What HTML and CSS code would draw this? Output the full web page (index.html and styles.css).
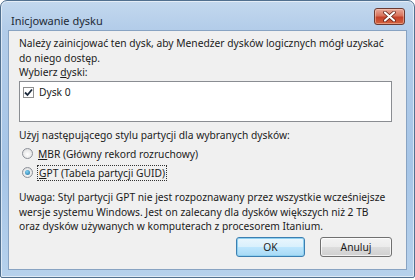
FILE: index.html
```html
<!DOCTYPE html>
<html lang="pl">
<head>
  <meta charset="UTF-8">
  <meta name="viewport" content="width=device-width, initial-scale=1.0">
  <title>Inicjowanie dysku</title>
  <link rel="stylesheet" href="styles.css">
</head>
<body>
  <div class="okno">
    <div class="pasek-tytulu">
      <span class="tytul">Inicjowanie dysku</span>
      <button class="zamknij" aria-label="Zamknij">
        <svg width="13" height="11" viewBox="0 0 13 11">
          <path d="M2 1.5 L11 9.5 M11 1.5 L2 9.5" stroke="#5a1a10" stroke-width="3.6" stroke-linecap="round"/>
          <path d="M2 1.5 L11 9.5 M11 1.5 L2 9.5" stroke="#fff" stroke-width="2.2" stroke-linecap="round"/>
        </svg>
      </button>
    </div>

    <div class="klient">
      <p class="opis">Należy zainicjować ten dysk, aby Menedżer dysków logicznych mógł uzyskać<br>do niego dostęp.</p>
      <div class="etykieta">Wybierz <u>d</u>yski:</div>
      <div class="lista">
        <label class="pozycja">
          <span class="pole-wyboru">
            <svg width="9" height="9" viewBox="0 0 9 9">
              <path d="M1 4.5 L3.5 7 L8 1.5" fill="none" stroke="#1c2a3c" stroke-width="1.8"/>
            </svg>
          </span>
          Dysk 0
        </label>
      </div>

      <div class="etykieta styl">Użyj następującego stylu partycji dla wybranych dysków:</div>
      <div class="opcje">
        <label class="opcja"><span class="radio"></span><span><u>M</u>BR (Główny rekord rozruchowy)</span></label>
        <label class="opcja"><span class="radio zaznaczone"></span><span class="fokus"><u>G</u>PT (Tabela partycji GUID)</span></label>
      </div>

      <p class="uwaga">Uwaga: Styl partycji GPT nie jest rozpoznawany przez wszystkie wcześniejsze<br>wersje systemu Windows. Jest on zalecany dla dysków większych niż 2 TB<br>oraz dysków używanych w komputerach z procesorem Itanium.</p>

      <div class="przyciski">
        <button class="przycisk domyslny">OK</button>
        <button class="przycisk">Anuluj</button>
      </div>
    </div>
  </div>
</body>
</html>
```

FILE: styles.css
```css
body {
  margin: 0;
  background: #ffffff;
  font-family: "Noto Sans", "Open Sans", sans-serif;
  font-size: 10.25px;
  color: #1b1b1b;
}
.okno {
  width: 415px;
  height: 278px;
  box-sizing: border-box;
  border: 1px solid #51708f;
  border-radius: 7px 7px 2px 2px;
  background: linear-gradient(to bottom, #c3d8ee 0%, #b2cce9 30px, #a6c5e7 60%, #b6d1ec 100%);
  box-shadow: inset 0 0 0 1px rgba(255,255,255,0.55);
  padding: 0 7px 7px 7px;
  display: flex;
  flex-direction: column;
}
.pasek-tytulu {
  height: 29px;
  display: flex;
  align-items: flex-start;
  justify-content: space-between;
}
.tytul {
  font-size: 11px;
  color: #1e2a36;
  padding-left: 3px;
  margin-top: 12px;
}
.zamknij {
  width: 31px;
  height: 17px;
  margin-top: 7px;
  margin-right: 2px;
  padding: 0;
  border: 1px solid #6b3a32;
  border-radius: 3px;
  background: linear-gradient(to bottom, #e9a99a 0%, #d8735c 45%, #c4412a 55%, #d2623e 100%);
  box-shadow: inset 0 0 0 1px rgba(255,220,200,0.45);
  display: flex;
  align-items: center;
  justify-content: center;
}
.klient {
  flex: 1;
  background: #f0f0f0;
  border: 1px solid #88a3c2;
  padding: 5px 14px 0 10px;
  display: flex;
  flex-direction: column;
}
.opis, .uwaga {
  margin: 0;
  line-height: 14.5px;
  white-space: nowrap;
}
.etykieta {
  line-height: 14.5px;
}
.lista {
  height: 35px;
  margin-top: 1px;
  background: #fff;
  border: 1px solid #8a8d92;
  padding: 2px 3px;
}
.pozycja {
  display: flex;
  align-items: center;
  gap: 5px;
  height: 15px;
  margin-top: 1px;
}
.pole-wyboru {
  width: 9px;
  height: 9px;
  border: 1px solid #8f8f8f;
  background: #fff;
  display: flex;
  align-items: center;
  justify-content: center;
}
.styl {
  margin-top: 6px;
}
.opcje {
  margin-top: 2px;
  display: flex;
  flex-direction: column;
}
.opcja {
  display: flex;
  align-items: center;
  gap: 5px;
  height: 19px;
  padding-left: 3px;
}
.radio {
  width: 9px;
  height: 9px;
  border-radius: 50%;
  border: 1px solid #8c9098;
  background: radial-gradient(circle at 50% 60%, #fff 0%, #e8e8e8 60%, #cfd1d4 100%);
  position: relative;
}
.radio.zaznaczone::after {
  content: "";
  position: absolute;
  left: 2px;
  top: 2px;
  width: 5px;
  height: 5px;
  border-radius: 50%;
  background: radial-gradient(circle at 40% 35%, #7fd2f5, #1f6e9c);
}
.fokus {
  outline: 1px dotted #333;
  outline-offset: 0;
  padding: 0 1px;
}
.uwaga {
  margin-top: 8px;
}
.przyciski {
  display: flex;
  justify-content: flex-end;
  gap: 15px;
  margin-top: 3px;
}
.przycisk {
  width: 72px;
  height: 20px;
  padding: 0;
  font-family: inherit;
  font-size: 10.25px;
  color: #1b1b1b;
  border: 1px solid #707070;
  border-radius: 3px;
  background: linear-gradient(to bottom, #f3f3f3 0%, #ebebeb 50%, #dddddd 51%, #cfcfcf 100%);
  box-shadow: inset 0 0 0 1px rgba(255,255,255,0.7);
}
.przycisk.domyslny {
  width: 69px;
  border-color: #3c7fb1;
  background: linear-gradient(to bottom, #eaf6fd 0%, #d9f0fc 50%, #bee6fd 51%, #a7d9f5 100%);
  box-shadow: inset 0 0 0 1px #8fd0f0;
}
```
